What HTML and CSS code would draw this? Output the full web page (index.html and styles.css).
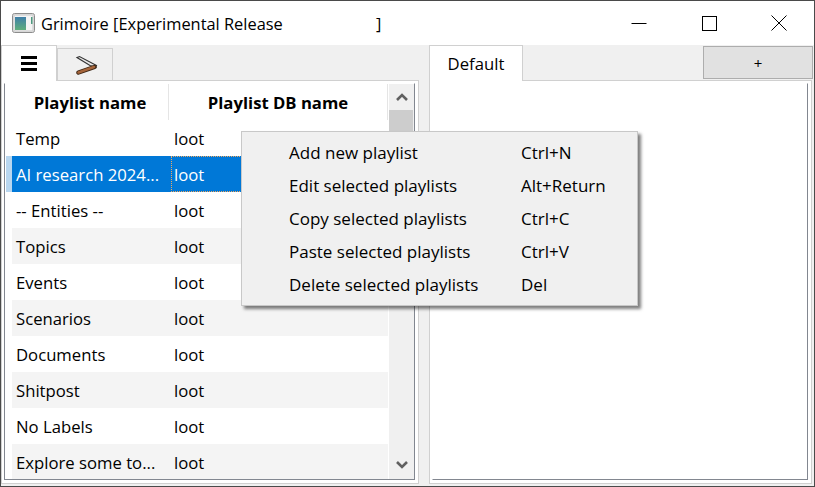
FILE: index.html
```html
<!DOCTYPE html>
<html lang="en">
<head>
  <meta charset="UTF-8">
  <title>Grimoire [Experimental Release ]</title>
  <link rel="stylesheet" href="styles.css">
</head>
<body>
  <div class="window">
    <div class="titlebar">
      <svg class="app-icon" width="23" height="20" viewBox="0 0 23 20">
        <defs>
          <linearGradient id="appFill" x1="0" y1="0" x2="0" y2="1">
            <stop offset="0" stop-color="#3f7fa8"/>
            <stop offset="1" stop-color="#5fae7c"/>
          </linearGradient>
        </defs>
        <rect x="0.5" y="0.5" width="22" height="19" rx="2" fill="#e6e6e6" stroke="#8c8c8c"/>
        <rect x="2" y="2" width="19" height="16" fill="#f4f4f4" stroke="#c8c8c8"/>
        <rect x="3" y="4" width="11" height="13" fill="url(#appFill)"/>
        <rect x="19" y="4" width="1.5" height="7" fill="#4f9a80"/>
      </svg>
      <span class="title-text">Grimoire [Experimental Release</span>
      <span class="title-end">]</span>
      <div class="win-buttons">
        <button class="win-btn">
          <svg width="16" height="16" viewBox="0 0 16 16"><path d="M0.5 8.5H15.5" stroke="#000" fill="none"/></svg>
        </button>
        <button class="win-btn">
          <svg width="16" height="16" viewBox="0 0 16 16"><rect x="1.5" y="1.5" width="14" height="14" stroke="#000" fill="none"/></svg>
        </button>
        <button class="win-btn">
          <svg width="16" height="16" viewBox="0 0 16 16"><path d="M0.5 0.5L15.5 15.5M15.5 0.5L0.5 15.5" stroke="#000" fill="none"/></svg>
        </button>
      </div>
    </div>

    <div class="panes">
      <section class="pane pane-left">
        <div class="tabbar">
          <div class="tab tab-active tab-icon">
            <svg width="16" height="16" viewBox="0 0 16 16">
              <rect x="0" y="0" width="16" height="3" fill="#000"/>
              <rect x="0" y="6" width="16" height="3" fill="#000"/>
              <rect x="0" y="12" width="16" height="3" fill="#000"/>
            </svg>
          </div>
          <div class="tab tab-icon tab-idle">
            <svg class="knife" width="24" height="20" viewBox="0 0 24 20">
              <path d="M2 2.5L4.5 1.5L21.5 10.5L20.5 12L15 10.5Z" fill="#e8e8e8" stroke="#333" stroke-width="1.1"/>
              <path d="M19.5 12L3.5 17.5" stroke="#3a2412" stroke-width="4.4" stroke-linecap="round"/>
              <path d="M19 12L3.5 17.5" stroke="#a5643a" stroke-width="2.6" stroke-linecap="round"/>
            </svg>
          </div>
        </div>
        <div class="pane-body">
          <div class="frame frame-list">
            <div class="list">
              <div class="list-head">
                <div class="head-cell head-name">Playlist name</div>
                <div class="head-cell head-db">Playlist DB name</div>
              </div>
              <div class="row"><div class="row-mark"></div><div class="cell-name">Temp</div><div class="cell-db">loot</div></div>
              <div class="row row-selected"><div class="row-mark"></div><div class="cell-name">AI research 2024...</div><div class="cell-db">loot</div></div>
              <div class="row"><div class="row-mark"></div><div class="cell-name">-- Entities --</div><div class="cell-db">loot</div></div>
              <div class="row row-alt"><div class="row-mark"></div><div class="cell-name">Topics</div><div class="cell-db">loot</div></div>
              <div class="row"><div class="row-mark"></div><div class="cell-name">Events</div><div class="cell-db">loot</div></div>
              <div class="row row-alt"><div class="row-mark"></div><div class="cell-name">Scenarios</div><div class="cell-db">loot</div></div>
              <div class="row"><div class="row-mark"></div><div class="cell-name">Documents</div><div class="cell-db">loot</div></div>
              <div class="row row-alt"><div class="row-mark"></div><div class="cell-name">Shitpost</div><div class="cell-db">loot</div></div>
              <div class="row"><div class="row-mark"></div><div class="cell-name">No Labels</div><div class="cell-db">loot</div></div>
              <div class="row row-alt"><div class="row-mark"></div><div class="cell-name">Explore some to...</div><div class="cell-db">loot</div></div>
            </div>
            <div class="scrollbar">
              <div class="scroll-btn">
                <svg width="12" height="10" viewBox="0 0 12 10"><path d="M1 8L6 3L11 8" stroke="#606060" stroke-width="2.6" fill="none"/></svg>
              </div>
              <div class="scroll-thumb"></div>
              <div class="scroll-track"></div>
              <div class="scroll-btn scroll-btn-down">
                <svg width="12" height="10" viewBox="0 0 12 10"><path d="M1 2L6 7L11 2" stroke="#606060" stroke-width="2.6" fill="none"/></svg>
              </div>
            </div>
          </div>
        </div>
      </section>

      <section class="pane pane-right">
        <div class="tabbar">
          <div class="tab tab-active tab-text">Default</div>
          <button class="add-tab">+</button>
        </div>
        <div class="pane-body">
          <div class="frame frame-empty"></div>
        </div>
      </section>
    </div>

    <div class="menu">
      <div class="menu-item"><span>Add new playlist</span><span>Ctrl+N</span></div>
      <div class="menu-item"><span>Edit selected playlists</span><span>Alt+Return</span></div>
      <div class="menu-item"><span>Copy selected playlists</span><span>Ctrl+C</span></div>
      <div class="menu-item"><span>Paste selected playlists</span><span>Ctrl+V</span></div>
      <div class="menu-item"><span>Delete selected playlists</span><span>Del</span></div>
    </div>
  </div>
</body>
</html>
```

FILE: styles.css
```css
html, body {
  margin: 0;
  padding: 0;
}
body {
  font-family: "Open Sans", "Noto Sans", sans-serif;
  font-size: 16.7px;
  color: #000;
  overflow: hidden;
}
.window {
  position: relative;
  box-sizing: border-box;
  width: 815px;
  height: 487px;
  border: 1px solid #4a4a4a;
  background-color: #f0f0f0;
  display: flex;
  flex-direction: column;
  overflow: hidden;
}

/* title bar */
.titlebar {
  height: 44px;
  flex: none;
  background-color: #fff;
  display: flex;
  align-items: center;
  padding-left: 11px;
}
.app-icon {
  margin-right: 6px;
}
.title-text {
  width: 335px;
  font-size: 16.4px;
  white-space: nowrap;
}
.title-end {
  font-size: 16.4px;
}
.win-buttons {
  margin-left: auto;
  display: flex;
  height: 100%;
}
.win-btn {
  width: 70px;
  padding: 0;
  border: none;
  background: none;
  display: flex;
  align-items: center;
  justify-content: center;
}

/* panes and tabs */
.panes {
  flex: 1;
  display: flex;
  gap: 10px;
  padding-bottom: 2px;
  min-height: 0;
}
.pane {
  display: flex;
  flex-direction: column;
}
.pane-left {
  width: 418px;
}
.pane-right {
  width: 383px;
}
.tabbar {
  height: 36px;
  flex: none;
  display: flex;
  margin-bottom: -1px;
  position: relative;
  z-index: 1;
}
.tab {
  box-sizing: border-box;
  display: flex;
  align-items: center;
  justify-content: center;
  border: 1px solid #d0d0d0;
}
.tab-active {
  background-color: #fff;
  border-bottom: none;
}
.tab-icon {
  width: 56px;
}
.tab-idle {
  margin-top: 3px;
  background-color: #f0f0f0;
}
.knife {
  margin-left: 3px;
}
.tab-text {
  width: 94px;
}
.add-tab {
  box-sizing: border-box;
  width: 110px;
  height: 33px;
  margin: 1px -1px 0 auto;
  padding: 0;
  border: 1px solid #adadad;
  background-color: #e1e1e1;
  font-family: inherit;
  font-size: 15px;
  color: #000;
}
.pane-body {
  flex: 1;
  min-height: 0;
  box-sizing: border-box;
  border: 1px solid #d0d0d0;
  background-color: #fff;
  padding: 2px 3px 3px 2px;
  display: flex;
}
.frame {
  flex: 1;
  min-width: 0;
  box-sizing: border-box;
  border: 1px solid #828790;
  border-top-color: #fff;
  display: flex;
  background-color: #fff;
}
.frame-empty {
  border-left-color: #fff;
}

/* playlist list */
.list {
  width: 383px;
  flex: none;
  overflow: hidden;
}
.list-head {
  height: 36px;
  display: flex;
  padding-left: 7px;
  font-weight: 700;
}
.head-cell {
  box-sizing: border-box;
  height: 36px;
  display: flex;
  align-items: center;
  justify-content: center;
  border-right: 1px solid #e5e5e5;
}
.head-name {
  width: 157px;
}
.head-db {
  width: 219px;
}
.row {
  height: 36px;
  display: flex;
  align-items: center;
}
.row-alt .cell-name,
.row-alt .cell-db {
  background-color: #f4f4f4;
}
.row-mark {
  width: 7px;
  height: 100%;
  flex: none;
}
.cell-name {
  box-sizing: border-box;
  width: 159px;
  height: 100%;
  padding-left: 4px;
  display: flex;
  align-items: center;
  white-space: nowrap;
}
.cell-db {
  box-sizing: border-box;
  width: 217px;
  height: 100%;
  padding-left: 3px;
  display: flex;
  align-items: center;
}
.row-selected .row-mark {
  background-color: #b9d7f0;
  box-shadow: inset 1px 0 #fff;
}
.row-selected .cell-name,
.row-selected .cell-db {
  background-color: #0078d7;
  color: #fff;
}
.row-selected .cell-db {
  outline: 1px dotted #f0a860;
  outline-offset: -1px;
}

/* scrollbar */
.scrollbar {
  flex: 1;
  display: flex;
  flex-direction: column;
  background-color: #f0f0f0;
  margin-left: 1px;
}
.scroll-btn {
  height: 26px;
  flex: none;
  display: flex;
  align-items: center;
  justify-content: center;
}
.scroll-btn-down {
  margin-top: auto;
  padding-bottom: 2px;
  box-sizing: border-box;
}
.scroll-thumb {
  height: 40px;
  flex: none;
  margin-right: 1px;
  background-color: #cdcdcd;
}

/* context menu */
.menu {
  position: absolute;
  left: 240px;
  top: 130px;
  box-sizing: border-box;
  width: 397px;
  height: 175px;
  padding: 4px 0 0 47px;
  border: 1px solid #c8c8c8;
  background-color: #f0f0f0;
  box-shadow: 3px 3px 3px rgba(0, 0, 0, 0.5);
  z-index: 2;
  font-size: 17px;
}
.menu-item {
  height: 33px;
  display: grid;
  grid-template-columns: 232px 1fr;
  align-items: center;
  white-space: nowrap;
}
```
